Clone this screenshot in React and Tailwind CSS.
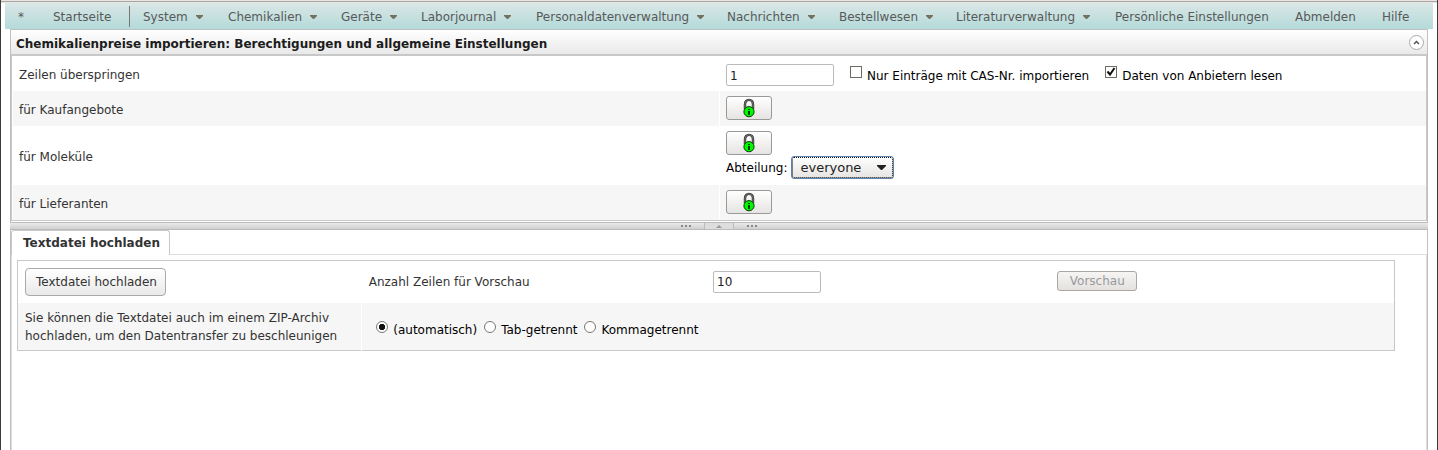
import React, { useState } from "react";

const menuItems = [
  { label: "*", width: "w-[35px]" },
  { label: "Startseite", width: "w-[77px]", divider: true },
  { label: "System", width: "w-[85px]", menu: true },
  { label: "Chemikalien", width: "w-[113px]", menu: true },
  { label: "Geräte", width: "w-[80px]", menu: true },
  { label: "Laborjournal", width: "w-[115px]", menu: true },
  { label: "Personaldatenverwaltung", width: "w-[191px]", menu: true },
  { label: "Nachrichten", width: "w-[112px]", menu: true },
  { label: "Bestellwesen", width: "w-[117px]", menu: true },
  { label: "Literaturverwaltung", width: "w-[159px]", menu: true },
  { label: "Persönliche Einstellungen", width: "w-[180px]" },
  { label: "Abmelden", width: "w-[87px]" },
  { label: "Hilfe", width: "w-[40px]" },
];

const separators = [
  { value: "auto", label: "(automatisch)" },
  { value: "tab", label: "Tab-getrennt" },
  { value: "comma", label: "Kommagetrennt" },
];

const MenuArrow = () => (
  <svg width="7" height="4" viewBox="0 0 7 4" className="shrink-0" aria-hidden="true">
    <path d="M0 0h7v1L4 4H3L0 1z" fill="#72705f" />
  </svg>
);

const NavBar = () => (
  <nav className="mx-1 flex h-[26px] items-center overflow-hidden whitespace-nowrap bg-linear-to-b from-[#dae6e6] to-[#b3dbda] pl-[13px] text-[#595959]">
    {menuItems.map(({ label, width, menu, divider }) => (
      <div
        key={label}
        className={`flex h-[21px] shrink-0 items-center pt-0.5 ${width} ${
          divider ? "mr-[13px] border-r border-[#777]" : ""
        }`}
      >
        <a href="#" className="flex items-center gap-2">
          {label}
          {menu && <MenuArrow />}
        </a>
      </div>
    ))}
  </nav>
);

const LockButton = ({ label }) => (
  <button
    type="button"
    aria-label={label}
    className="flex h-6 w-[46px] items-center justify-center rounded-[3px] border border-[#999] bg-linear-to-b from-white to-[#e6e4e2]"
  >
    <svg width="12" height="20" viewBox="0 0 12 20" aria-hidden="true">
      <path d="M2 11V6.500C2 3.500 3.600 1.900 6 1.900s4 1.600 4 4.600V11" fill="none" stroke="#2e2e2e" strokeWidth="2.400" />
      <path d="M2 11V6.500C2 3.500 3.600 1.900 6 1.900s4 1.600 4 4.600V11" fill="none" stroke="#8a8a8a" strokeWidth="0.900" />
      <circle cx="6" cy="13.700" r="5.100" fill="#00f800" stroke="#063c06" strokeWidth="1" />
      <path d="M5 11h2v1H5zM5 13h2v4H5z" fill="#003800" />
    </svg>
  </button>
);

const Row = ({ label, shaded, children }) => (
  <tr className={shaded ? "bg-[#f6f6f6]" : "bg-white"}>
    <th
      scope="row"
      className="w-1/2 border-r border-white pb-1 pl-[6px] pt-[6px] text-left font-normal text-[#333]"
    >
      {label}
    </th>
    <td className="px-[6px] pb-[6px] pt-[5px]">{children}</td>
  </tr>
);

const CheckOption = ({ id, label, defaultChecked }) => (
  <span className="flex items-center gap-[5px]">
    <input
      id={id}
      type="checkbox"
      defaultChecked={defaultChecked}
      className="mb-[6px] size-3 appearance-none border border-[#6f6c68] bg-white bg-center bg-no-repeat checked:bg-[url('data:image/svg+xml,%3Csvg%20xmlns=%22http://www.w3.org/2000/svg%22%20width=%2210%22%20height=%2210%22%3E%3Cpath%20d=%22M1.500%204.500L4%207.500L8.500%201%22%20fill=%22none%22%20stroke=%22%23111%22%20stroke-width=%222%22/%3E%3C/svg%3E')]"
    />
    <label htmlFor={id} className="pt-px">
      {label}
    </label>
  </span>
);

const Dots = () => (
  <span className="flex gap-[2px]">
    <span className="size-[2px] bg-[#888]" />
    <span className="size-[2px] bg-[#888]" />
    <span className="size-[2px] bg-[#888]" />
  </span>
);

const Splitter = () => (
  <div className="flex h-2 items-center justify-center gap-[13px] border-y border-[#bbb] bg-linear-to-b from-[#ebebeb] to-[#cfcfcf]">
    <Dots />
    <button
      type="button"
      aria-label="Einklappen"
      className="flex h-full w-[30px] items-center justify-center border-x border-[#bbb] bg-[#ddd]"
    >
      <svg width="6" height="3" viewBox="0 0 6 3" aria-hidden="true">
        <path d="M3 0l3 3H0z" fill="#999" />
      </svg>
    </button>
    <Dots />
  </div>
);

const SettingsPanel = () => (
  <section className="border border-b-0 border-[#c0c0c0]">
    <header className="flex h-[26px] items-center justify-between border-b-2 border-[#c8c8c8] bg-linear-to-b from-white to-[#e9e9e9] pl-[5px] pr-[3px]">
      <h1 className="pt-[3px] font-bold text-[#1c1c1c]">
        Chemikalienpreise importieren: Berechtigungen und allgemeine Einstellungen
      </h1>
      <button
        type="button"
        aria-label="Zuklappen"
        className="grid size-[15px] place-items-center rounded-full border border-[#aaa] bg-white"
      >
        <svg width="7" height="5" viewBox="0 0 7 5" aria-hidden="true">
          <path d="M1 4l2.500-2.500L6 4" fill="none" stroke="#555" strokeWidth="1.500" />
        </svg>
      </button>
    </header>

    <div className="mb-px border-x border-b border-[#c8c8c8] pl-px">
      <table className="w-full border-collapse">
        <tbody>
          <Row label={<label htmlFor="skip">Zeilen überspringen</label>}>
            <div className="flex h-6 items-center gap-4 pt-1">
              <input
                id="skip"
                type="text"
                defaultValue="1"
                className="h-[22px] w-[108px] rounded-[2px] border border-[#bbb] bg-white px-[3px] pt-px text-[#222]"
              />
              <CheckOption id="cas" label="Nur Einträge mit CAS-Nr. importieren" />
              <CheckOption id="vendors" label="Daten von Anbietern lesen" defaultChecked />
            </div>
          </Row>
          <Row label="für Kaufangebote" shaded>
            <LockButton label="Berechtigung Kaufangebote" />
          </Row>
          <Row label="für Moleküle">
            <LockButton label="Berechtigung Moleküle" />
            <div className="mt-px flex items-center gap-1">
              <label htmlFor="department">Abteilung:</label>
              <span className="relative flex items-center">
                <select
                  id="department"
                  className="h-[23px] w-[103px] appearance-none rounded-[3px] border border-[#5f83ae] bg-linear-to-b from-white to-[#e6e4e2] pl-2 text-[13px] text-[#222] outline-1 -outline-offset-2 outline-dotted outline-[#111]"
                >
                  <option>everyone</option>
                </select>
                <svg width="9" height="5" viewBox="0 0 9 5" className="pointer-events-none absolute right-2" aria-hidden="true">
                  <path d="M0 0h9v1L5 5H4L0 1z" fill="#222" />
                </svg>
              </span>
            </div>
          </Row>
          <Row label="für Lieferanten" shaded>
            <LockButton label="Berechtigung Lieferanten" />
          </Row>
        </tbody>
      </table>
    </div>
  </section>
);

const UploadPanel = () => {
  const [separator, setSeparator] = useState("auto");

  return (
    <section className="flex grow flex-col border-x border-[#c0c0c0]">
      <div className="flex h-[25px]" role="tablist">
        <button
          type="button"
          role="tab"
          aria-selected="true"
          className="rounded-t-[3px] border border-b-0 border-[#c8c8c8] bg-white pl-[11px] pr-[9px] font-bold text-[#333]"
        >
          Textdatei hochladen
        </button>
        <div className="grow border-b border-[#ddd]" />
      </div>

      <div className="grow border-x border-[#ddd] pb-2 pl-[5px] pr-[31px] pt-[5px]">
        <table className="w-full table-fixed border border-[#c8c8c8] text-[#333]">
          <colgroup>
            <col className="w-[25%]" />
            <col className="w-[25%]" />
            <col className="w-[25%]" />
            <col className="w-[25%]" />
          </colgroup>
          <tbody>
            <tr className="h-[42px]">
              <td className="pl-[7px]">
                <button
                  type="button"
                  className="flex h-7 items-center rounded-[4px] border border-[#aaa] bg-linear-to-b from-white to-[#e9e9e9] pl-[10px] pr-2 pt-px"
                >
                  Textdatei hochladen
                </button>
              </td>
              <td className="pl-[7px] pt-px">
                <label htmlFor="preview">Anzahl Zeilen für Vorschau</label>
              </td>
              <td className="pl-[7px]">
                <input
                  id="preview"
                  type="text"
                  defaultValue="10"
                  className="h-[22px] w-[108px] rounded-[2px] border border-[#bbb] bg-white px-[3px] pt-px text-[#222]"
                />
              </td>
              <td className="pb-[2px] pl-[7px]">
                <button
                  type="button"
                  disabled
                  className="flex h-5 w-20 items-center justify-center rounded-[3px] border border-[#aaa6a2] bg-linear-to-b from-[#f6f5f4] to-[#e4e2e0] pt-px text-[#999]"
                >
                  Vorschau
                </button>
              </td>
            </tr>
            <tr className="h-12 bg-[#f6f6f6]">
              <td className="whitespace-nowrap border-r border-white pl-[7px] pt-px leading-[18px]">
                Sie können die Textdatei auch im einem ZIP-Archiv
                <br />
                hochladen, um den Datentransfer zu beschleunigen
              </td>
              <td colSpan={3} className="pl-[14px]">
                <div className="flex gap-[7px] pt-[3px] text-black">
                  {separators.map(({ value, label }) => (
                    <span key={value} className="flex items-center gap-[5px]">
                      <input
                        id={value}
                        type="radio"
                        name="separator"
                        checked={separator === value}
                        onChange={() => setSeparator(value)}
                        className="mb-[2px] size-3 appearance-none rounded-full border border-[#777] bg-white checked:bg-radial checked:from-[#111] checked:from-40% checked:to-white checked:to-50%"
                      />
                      <label htmlFor={value} className="pt-1">
                        {label}
                      </label>
                    </span>
                  ))}
                </div>
              </td>
            </tr>
          </tbody>
        </table>
      </div>
    </section>
  );
};

const App = () => (
  <div className="flex min-h-screen flex-col border-x border-[#3c3c3c] bg-white font-['DejaVu_Sans',sans-serif] text-[12px] leading-4 text-black">
    <div className="h-[3px] border-y border-[#e8e6e4] bg-[#aaa5a0]" />
    <NavBar />
    <main className="mx-[9px] flex grow flex-col">
      <SettingsPanel />
      <Splitter />
      <UploadPanel />
    </main>
  </div>
);

export default App;
